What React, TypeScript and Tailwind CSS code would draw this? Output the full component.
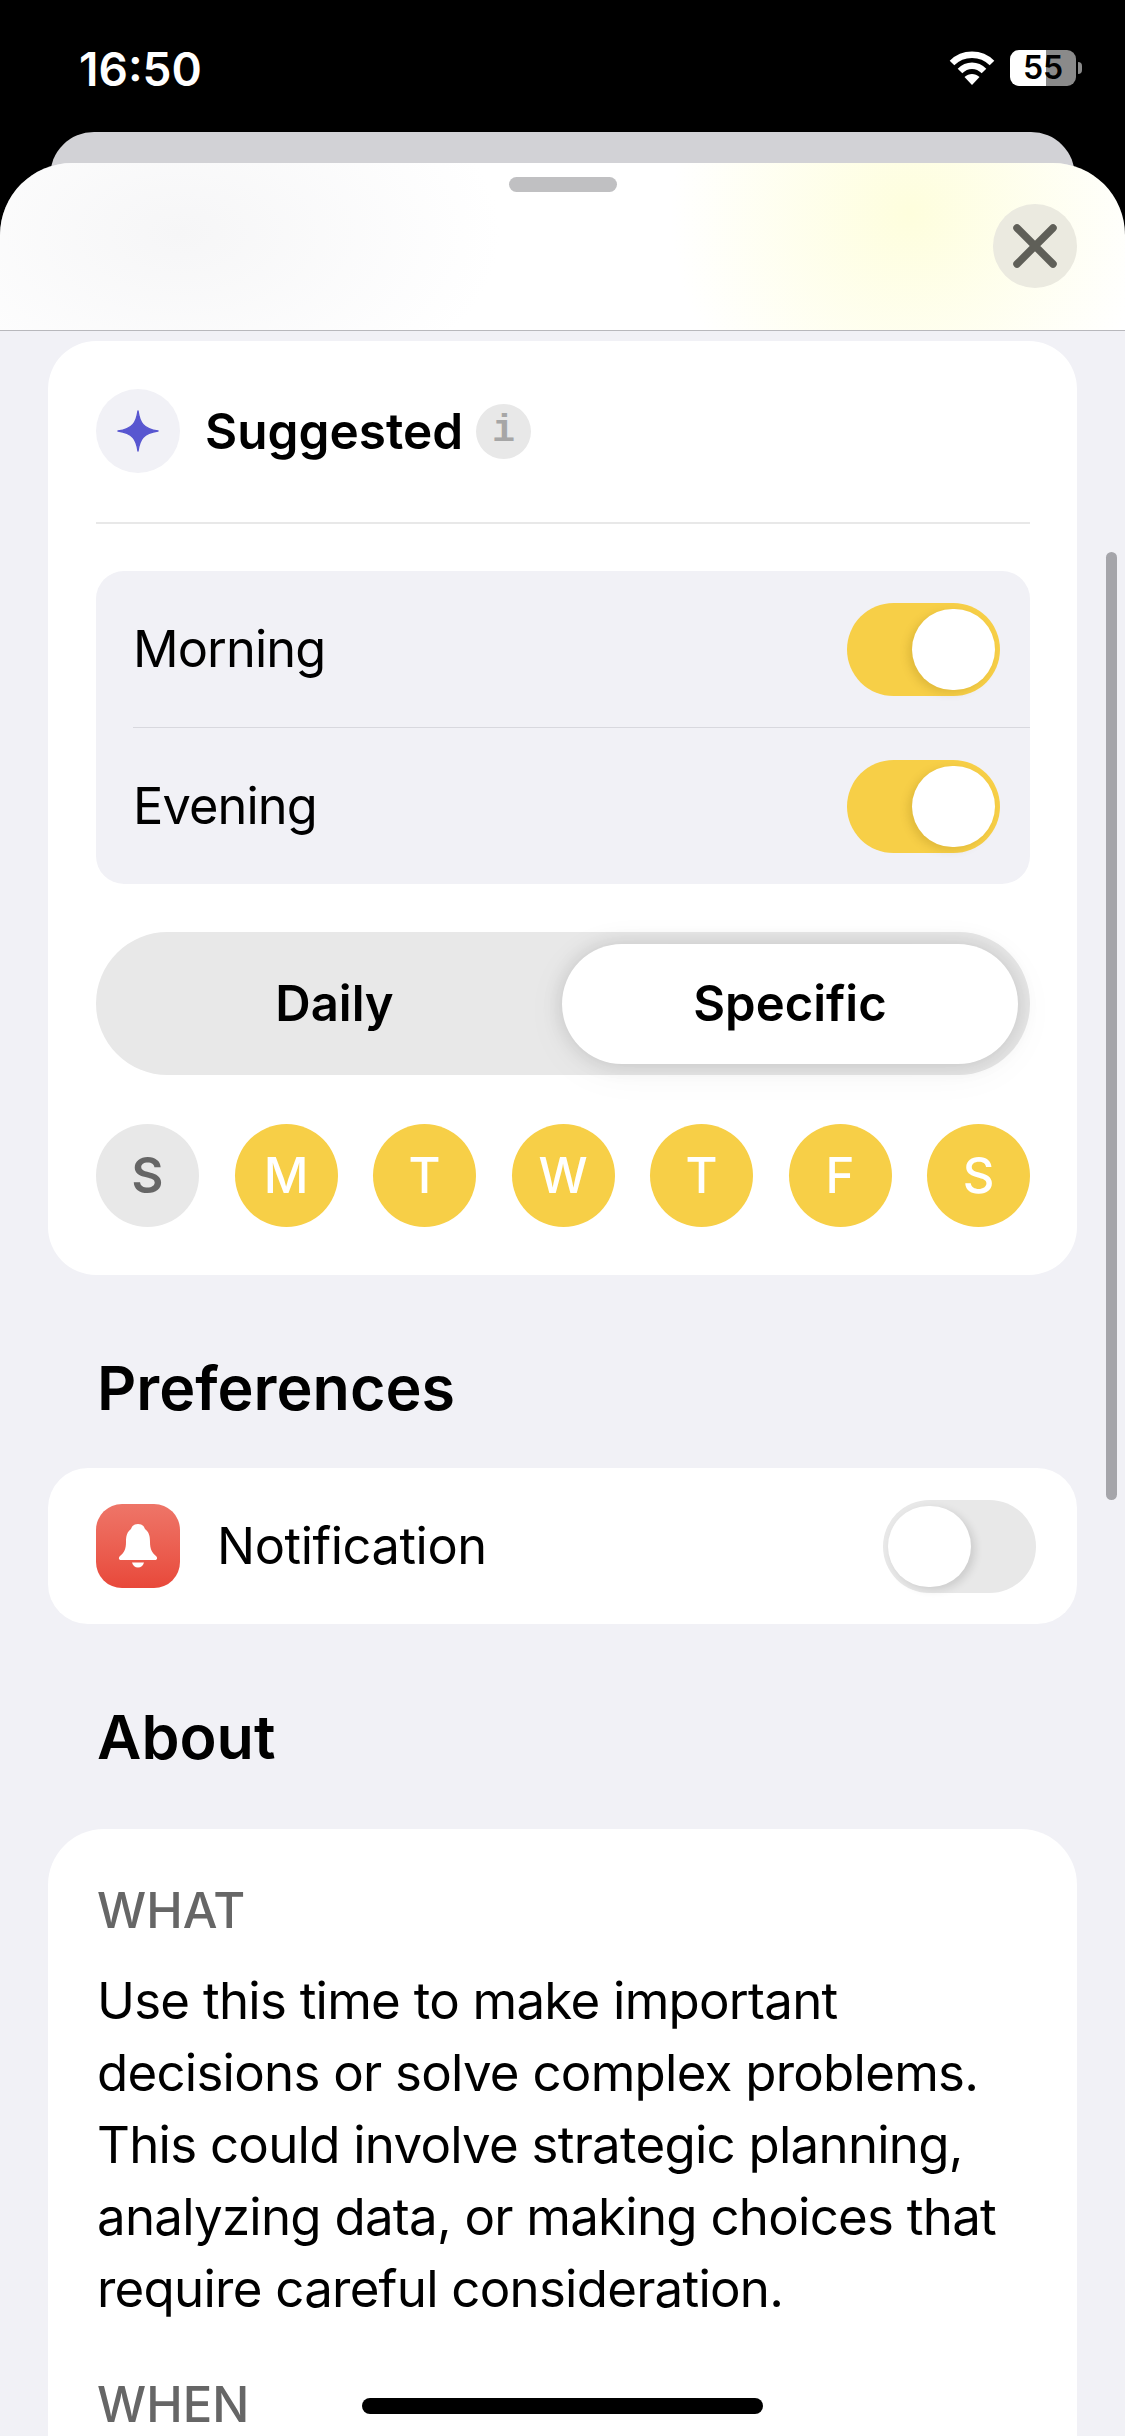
import React from 'react';

const font = { fontFamily: 'Inter, "Noto Sans", sans-serif' };

const Toggle: React.FC<{ on: boolean }> = ({ on }) => (
  <div
    className={`flex h-[93px] w-[153px] items-center rounded-full px-[5px] ${
      on ? 'justify-end bg-[#f7cf47]' : 'justify-start bg-[#e8e8e8]'
    }`}
  >
    <div
      className={`h-[81px] w-[83px] rounded-full bg-white ${
        on ? 'shadow-[-4px_3px_8px_rgba(120,90,0,0.18)]' : 'shadow-[4px_3px_8px_rgba(0,0,0,0.12)]'
      }`}
    />
  </div>
);

const DayCircle: React.FC<{ label: string; active: boolean }> = ({ label, active }) => (
  <div
    className={`flex h-[103px] w-[103px] items-center justify-center rounded-full text-[49px] ${
      active ? 'bg-[#f7cf47] font-medium text-white' : 'bg-[#e8e8e8] font-semibold text-[#666666]'
    }`}
  >
    {label}
  </div>
);

const StatusBar = () => (
  <div className="flex h-[132px] items-start justify-between bg-black pl-[79px] pr-[43px] pt-[43px]">
    <span className="text-[46px] leading-[52px] font-semibold text-white">16:50</span>
    <div className="flex items-center gap-[15px] pt-[7px]">
      <svg width="46" height="34" viewBox="0 0 46 34" fill="none">
        <path d="M3 12 C14 1 32 1 43 12" stroke="white" strokeWidth="6.5" strokeLinecap="butt" />
        <path d="M11 20 C18 13 28 13 35 20" stroke="white" strokeWidth="6.5" strokeLinecap="butt" />
        <path d="M15.5 26 C20 22 26 22 30.5 26 L23 34 Z" fill="white" />
      </svg>
      <div className="flex items-center gap-[2px]">
        <div className="flex h-[36px] w-[66px] items-center justify-center rounded-[9px] bg-[linear-gradient(90deg,#ffffff_55%,#8a8a8a_55%)]">
          <span className="text-[32px] leading-none font-semibold text-black">55</span>
        </div>
        <div className="h-[12px] w-[4px] rounded-r-full bg-[#8a8a8a]" />
      </div>
    </div>
  </div>
);

const SheetHeader = () => (
  <div className="relative -mt-[59px] flex h-[168px] flex-col items-center rounded-t-[72px] border-b border-[#b8b8bc] bg-white bg-[radial-gradient(ellipse_240px_240px_at_910px_50px,#fefedd,rgba(255,255,255,0)),radial-gradient(ellipse_320px_190px_at_180px_70px,#f6f6f7,rgba(255,255,255,0))]">
    <div className="mt-[14px] h-[15px] w-[108px] rounded-full bg-[#c0c0c2]" />
    {/* close button */}
    <div className="absolute right-[48px] top-[41px] flex h-[84px] w-[84px] items-center justify-center rounded-full bg-[#ebeae0]">
      <svg width="44" height="44" viewBox="0 0 44 44" fill="none">
        <path d="M4 4 L40 40 M40 4 L4 40" stroke="#5f5f58" strokeWidth="7.5" strokeLinecap="round" />
      </svg>
    </div>
  </div>
);

const SuggestedCard = () => (
  <div className="ml-[48px] mr-[48px] rounded-[48px] bg-white pb-[48px] pl-[48px] pr-[47px] pt-[48px]">
    <div className="flex items-center">
      <div className="flex h-[84px] w-[84px] items-center justify-center rounded-full bg-[#f1f1f6]">
        <svg width="42" height="42" viewBox="0 0 42 42">
          <path
            d="M21 1 C22.5 12 26 19 41 21 C26 23 22.5 30 21 41 C19.5 30 16 23 1 21 C16 19 19.5 12 21 1 Z"
            fill="#5856d0"
            stroke="#5856d0"
            strokeWidth="1.5"
            strokeLinejoin="round"
          />
        </svg>
      </div>
      <span className="ml-[25px] text-[49.5px] leading-[60px] font-semibold text-black">Suggested</span>
      <div className="ml-[13px] flex h-[55px] w-[55px] items-center justify-center rounded-full bg-[#e8e8e8]">
        <span className="text-[38px] leading-none font-bold text-[#a6a6a6]" style={{ fontFamily: '"Liberation Mono", monospace' }}>
          i
        </span>
      </div>
    </div>

    <div className="mt-[49px] h-[2px] bg-[#e8e8e8]" />

    <div className="mt-[47px] rounded-[28px] bg-[#f1f1f6] pl-[37px]">
      <div className="flex h-[157px] items-center justify-between border-b border-[#d8d8de] pr-[30px]">
        <span className="text-[50.5px] leading-[60px] tracking-[-0.9px] text-black">Morning</span>
        <Toggle on />
      </div>
      <div className="flex h-[156px] items-center justify-between pr-[30px]">
        <span className="text-[50.5px] leading-[60px] tracking-[-0.9px] text-black">Evening</span>
        <Toggle on />
      </div>
    </div>

    <div className="mt-[48px] flex h-[143px] items-center rounded-full bg-[#e8e8e8] pl-[11px] pr-[12px]">
      <div className="flex flex-1 justify-center text-[49px] font-semibold text-black">Daily</div>
      <div className="flex h-[120px] w-[456px] items-center justify-center rounded-full bg-white text-[49px] font-semibold text-black shadow-[0_0_20px_rgba(0,0,0,0.13),0_6px_44px_rgba(0,0,0,0.05)]">
        Specific
      </div>
    </div>

    <div className="mt-[49px] flex justify-between">
      <DayCircle label="S" active={false} />
      {['M', 'T', 'W', 'T', 'F', 'S'].map((d, i) => (
        <DayCircle key={i} label={d} active />
      ))}
    </div>
  </div>
);

const Heading: React.FC<{ title: string; className: string }> = ({ title, className }) => (
  <h2 className={`ml-[97px] text-[61px] leading-[76px] font-semibold text-black ${className}`}>{title}</h2>
);

const NotificationCard = () => (
  <div className="mx-[48px] flex h-[156px] items-center justify-between rounded-[40px] bg-white pl-[48px] pr-[41px]">
    <div className="flex items-center">
      <div className="flex h-[84px] w-[84px] items-center justify-center rounded-[26px] bg-gradient-to-b from-[#ee7568] to-[#e8483a]">
        <svg width="40" height="44" viewBox="0 0 40 44">
          <path
            d="M20 0 C24 0 26 2 27 5 C31 8 32 12 32 18 C32 25 34 29 38 32 C40 34 39 36 37 36 L3 36 C1 36 0 34 2 32 C6 29 8 25 8 18 C8 12 9 8 13 5 C14 2 16 0 20 0 Z"
            fill="white"
          />
          <path d="M14 38.5 L26 38.5 C25 42 23 43.5 20 43.5 C17 43.5 15 42 14 38.5 Z" fill="white" />
        </svg>
      </div>
      <span className="ml-[37px] text-[50.5px] leading-[60px] tracking-[-0.4px] text-black">Notification</span>
    </div>
    <Toggle on={false} />
  </div>
);

const AboutCard = () => (
  <div className="mx-[48px] rounded-t-[56px] bg-white px-[49px] pt-[50px]">
    <div className="text-[49px] leading-[64px] font-medium text-[#666666]">WHAT</div>
    <p className="mt-[22px] text-[51px] leading-[72px] tracking-[-0.75px] text-black">
      Use this time to make important
      <br />
      decisions or solve complex problems.
      <br />
      This could involve strategic planning,
      <br />
      analyzing data, or making choices that
      <br />
      require careful consideration.
    </p>
    <div className="mt-[48px] text-[49px] leading-[64px] font-medium text-[#666666]">WHEN</div>
  </div>
);

export default function App() {
  return (
    <div className="relative h-[2436px] w-[1125px] overflow-hidden bg-black" style={font}>
      <StatusBar />
      <div className="mx-[50px] h-[90px] rounded-t-[44px] bg-[#d2d2d6]" />
      <SheetHeader />

      <div className="relative h-[2105px] bg-[#f1f1f6] pt-[10px]">
        <SuggestedCard />
        <Heading title="Preferences" className="mb-[42px] mt-[75px]" />
        <NotificationCard />
        <Heading title="About" className="mb-[54px] mt-[75px]" />
        <AboutCard />
      </div>

      {/* scroll indicator and home bar float over the sheet */}
      <div className="absolute left-[1106px] top-[552px] h-[948px] w-[11px] rounded-full bg-[#a5a5aa]" />
      <div className="absolute bottom-[22px] left-[362px] h-[16px] w-[401px] rounded-full bg-black" />
    </div>
  );
}
